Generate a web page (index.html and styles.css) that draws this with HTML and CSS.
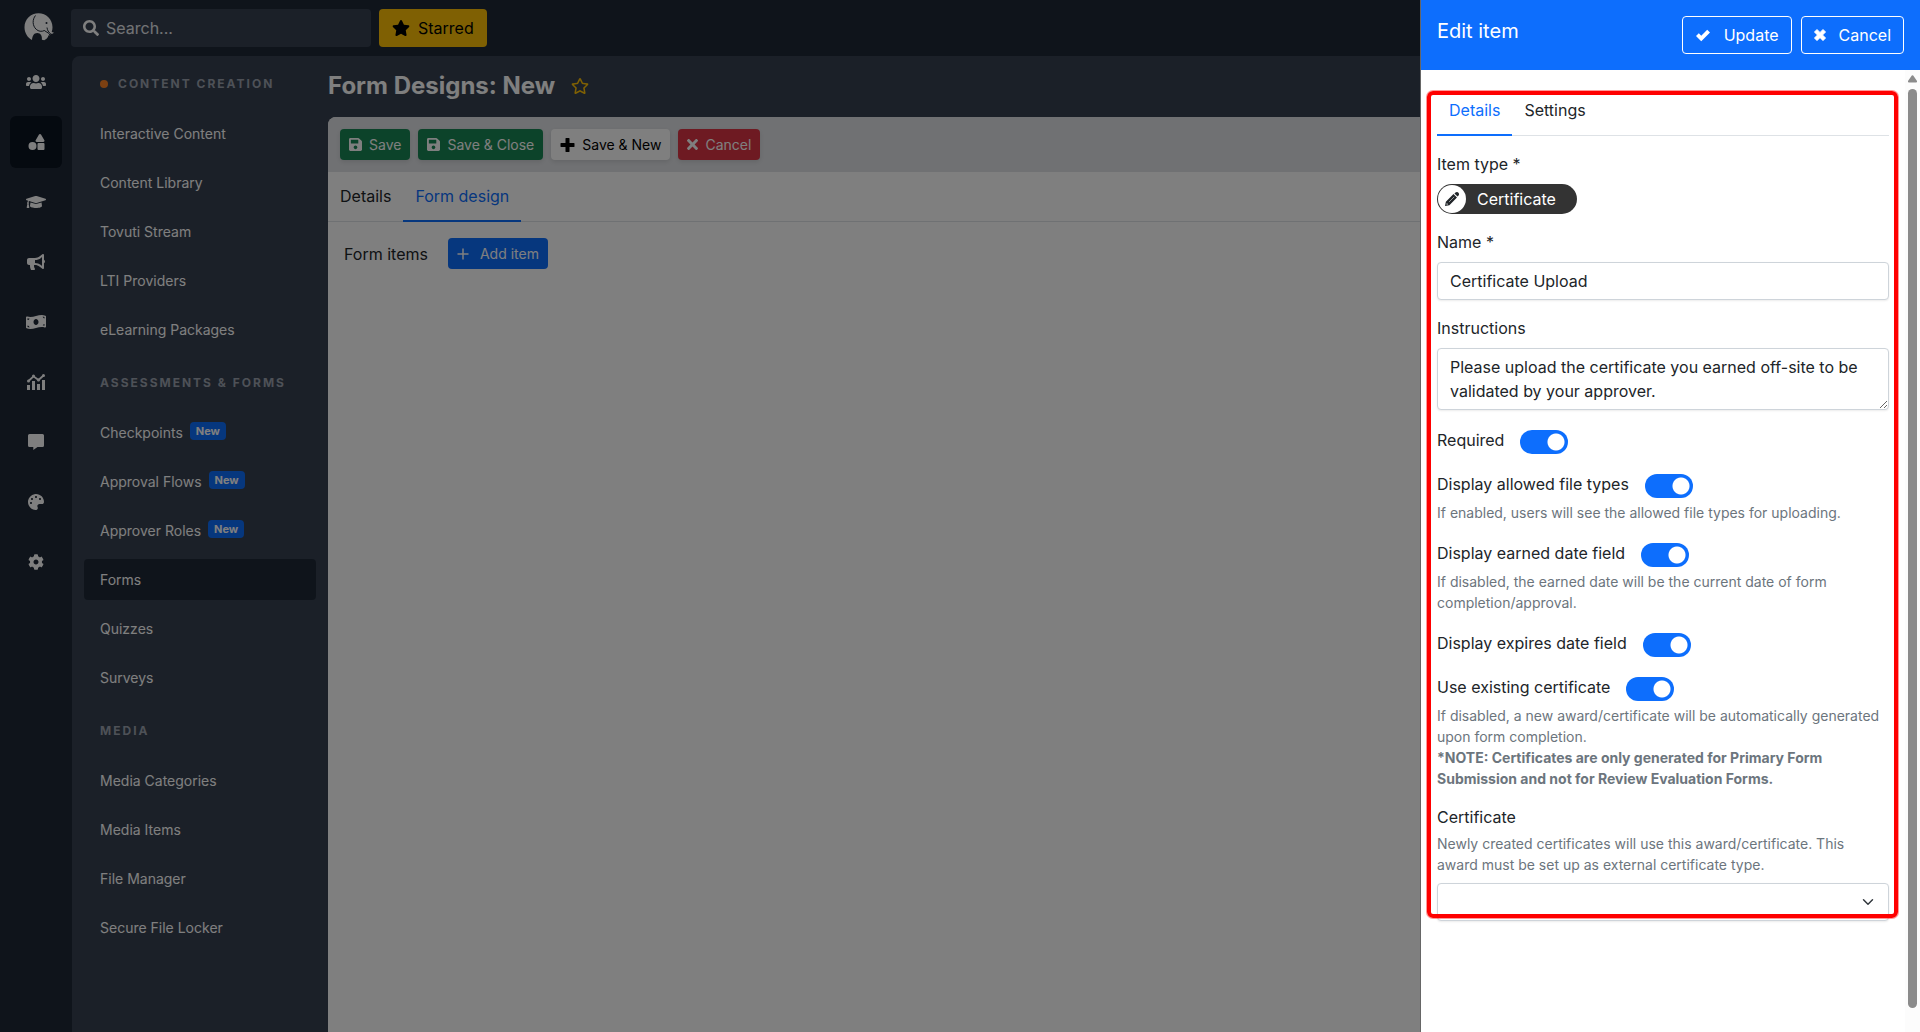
FILE: index.html
```html
<!DOCTYPE html>
<html lang="en">
<head>
    <meta charset="UTF-8">
    <meta name="viewport" content="width=device-width, initial-scale=1.0">
    <title>Form Designs: New</title>
    <link rel="stylesheet" href="styles.css">
</head>
<body>
    <svg class="sprite" aria-hidden="true">
        <symbol id="i-users" viewBox="0 0 640 512"><path d="M96 224c35.3 0 64-28.7 64-64s-28.7-64-64-64-64 28.7-64 64 28.7 64 64 64zm448 0c35.3 0 64-28.7 64-64s-28.7-64-64-64-64 28.7-64 64 28.7 64 64 64zm32 32h-64c-17.6 0-33.5 7.1-45.1 18.6 40.3 22.1 68.9 62 75.1 109.4h66c17.7 0 32-14.3 32-32v-32c0-35.3-28.7-64-64-64zm-256 0c61.9 0 112-50.1 112-112S381.9 32 320 32 208 82.1 208 144s50.1 112 112 112zm76.8 32h-8.3c-20.8 10-43.9 16-68.5 16s-47.6-6-68.5-16h-8.3C179.6 288 128 339.6 128 403.2V432c0 26.5 21.5 48 48 48h288c26.5 0 48-21.5 48-48v-28.8c0-63.6-51.6-115.2-115.2-115.2zm-223.7-13.4C161.5 263.1 145.6 256 128 256H64c-35.3 0-64 28.7-64 64v32c0 17.7 14.3 32 32 32h65.9c6.3-47.4 34.9-87.3 75.2-109.4z"/></symbol>
        <symbol id="i-shapes" viewBox="0 0 512 512"><path d="M128 256A128 128 0 1 0 256 384 128 128 0 0 0 128 256Zm379-54.86L400.07 18.29a37.26 37.26 0 0 0-64.14 0L229 201.14C214.76 225.52 232.58 256 261.09 256H474.91C503.42 256 521.24 225.52 507 201.14ZM480 288H320a32 32 0 0 0-32 32V480a32 32 0 0 0 32 32H480a32 32 0 0 0 32-32V320A32 32 0 0 0 480 288Z"/></symbol>
        <symbol id="i-cap" viewBox="0 0 640 512"><path d="M622.34 153.2L343.4 67.5c-15.2-4.67-31.6-4.67-46.79 0L17.66 153.2c-23.54 7.23-23.54 38.36 0 45.59l48.63 14.94c-10.67 13.19-17.23 29.28-17.88 46.9C38.78 266.15 32 276.11 32 288c0 10.78 5.68 19.85 13.86 25.65L20.33 428.53C18.11 438.52 25.71 448 35.94 448h56.11c10.24 0 17.84-9.48 15.62-19.47L82.14 313.65C90.32 307.85 96 298.78 96 288c0-11.57-6.47-21.25-15.66-26.87.76-15.02 8.44-28.3 20.69-36.72L296.6 284.5c9.06 2.78 26.44 6.25 46.79 0l278.95-85.7c23.55-7.24 23.55-38.36 0-45.6zM352.79 315.09c-28.53 8.76-52.84 3.92-65.59 0l-145.02-44.55L128 384c0 35.35 85.96 64 192 64s192-28.65 192-64l-14.18-113.47-145.03 44.56z"/></symbol>
        <symbol id="i-bullhorn" viewBox="0 0 576 512"><path d="M576 240c0-23.63-12.95-44.04-32-55.12V32.01C544 23.26 537.02 0 512 0c-7.12 0-14.19 2.38-19.98 7.02l-85.03 68.03C364.28 109.19 310.66 128 256 128H64c-35.35 0-64 28.65-64 64v96c0 35.35 28.65 64 64 64h33.7c-1.39 10.48-2.18 21.14-2.18 32 0 39.77 9.26 77.35 25.56 110.94 5.19 10.69 16.52 17.06 28.4 17.06h74.28c26.05 0 41.69-29.84 25.9-50.56-16.4-21.52-26.15-48.36-26.15-77.44 0-11.11 1.62-21.79 4.41-32H256c54.66 0 108.28 18.81 150.98 52.95l85.03 68.03a32.023 32.023 0 0 0 19.98 7.02c24.92 0 32-22.78 32-32V295.13C563.05 284.04 576 263.63 576 240zm-96 141.42l-33.05-26.44C392.95 311.78 325.12 288 256 288v-96c69.12 0 136.95-23.78 190.95-66.98L480 98.58v282.84z"/></symbol>
        <symbol id="i-money" viewBox="0 0 640 512"><path d="M621.16 54.46C582.37 38.19 543.55 32 504.75 32c-123.17-.01-246.33 62.34-369.5 62.34-30.89 0-61.76-3.92-92.65-13.72-3.47-1.1-6.95-1.62-10.35-1.62C15.04 79 0 92.32 0 110.81v317.26c0 12.63 7.23 24.6 18.84 29.46C57.63 473.81 96.45 480 135.25 480c123.17 0 246.34-62.35 369.51-62.35 30.89 0 61.76 3.92 92.65 13.72 3.47 1.1 6.95 1.62 10.35 1.62 17.21 0 32.25-13.32 32.25-31.81V83.93c-.01-12.64-7.24-24.6-18.85-29.47zM48 132.22c20.12 5.04 41.12 7.57 62.72 8.93C104.84 170.54 79 192.69 48 192.69v-60.47zm0 285v-47.78c34.37 0 62.18 27.27 63.71 61.4-22.53-1.81-43.59-6.31-63.71-13.62zM320 352c-44.19 0-80-42.99-80-96 0-53.02 35.82-96 80-96s80 42.98 80 96c0 53.03-35.83 96-80 96zm272 27.78c-17.52-4.39-35.71-6.85-54.32-8.44 5.87-26.08 27.5-45.88 54.32-49.28v57.72zm0-236.11c-30.89-3.91-54.86-29.7-55.81-61.55 19.54 2.17 38.09 6.23 55.81 12.66v48.89z"/></symbol>
        <symbol id="i-chart" viewBox="0 0 19 16"><path d="M0 11h3v5H0zM5 7h3v9H5zM10 10h3v6h-3zM15 6h3v10h-3z"/><path d="M1.500 7 6.500 2.300 11.500 6 16.500 1.500" fill="none" stroke="currentColor" stroke-width="1.800"/><circle cx="1.500" cy="7" r="1.500"/><circle cx="6.500" cy="2" r="1.500"/><circle cx="11.500" cy="6" r="1.500"/><circle cx="16.500" cy="1.500" r="1.500"/></symbol>
        <symbol id="i-comment" viewBox="0 0 16 16"><path d="M1.500 0h13A1.500 1.500 0 0 1 16 1.500v10a1.500 1.500 0 0 1-1.500 1.500H9.500L5.300 16v-3H1.500A1.500 1.500 0 0 1 0 11.500V1.500A1.500 1.500 0 0 1 1.500 0z"/></symbol>
        <symbol id="i-palette" viewBox="0 0 512 512"><path d="M204.3 5C104.9 24.4 24.8 104.3 5.2 203.4c-37 187 131.7 326.4 258.8 306.7 41.2-6.4 61.4-54.6 42.5-91.7-23.1-45.4 9.9-98.4 60.9-98.4h79.7c35.8 0 64.8-29.6 64.9-65.3C511.5 97.1 368.1-26.9 204.3 5zM96 320c-17.7 0-32-14.3-32-32s14.3-32 32-32 32 14.3 32 32-14.3 32-32 32zm32-128c-17.7 0-32-14.3-32-32s14.3-32 32-32 32 14.3 32 32-14.3 32-32 32zm128-64c-17.7 0-32-14.3-32-32s14.3-32 32-32 32 14.3 32 32-14.3 32-32 32zm128 64c-17.7 0-32-14.3-32-32s14.3-32 32-32 32 14.3 32 32-14.3 32-32 32z"/></symbol>
        <symbol id="i-cog" viewBox="0 0 512 512"><path d="M487.4 315.7l-42.6-24.6c4.3-23.2 4.3-47 0-70.2l42.6-24.6c4.9-2.8 7.1-8.6 5.5-14-11.1-35.6-30-67.8-54.7-94.6-3.8-4.1-10-5.1-14.8-2.3L380.8 110c-17.9-15.4-38.5-27.3-60.8-35.1V25.8c0-5.6-3.9-10.5-9.4-11.7-36.7-8.2-74.3-7.8-109.2 0-5.5 1.2-9.4 6.1-9.4 11.7V75c-22.2 7.9-42.8 19.8-60.8 35.1L88.7 85.5c-4.9-2.8-11-1.9-14.8 2.3-24.7 26.7-43.6 58.9-54.7 94.6-1.7 5.4.6 11.2 5.5 14L67.3 221c-4.3 23.2-4.3 47 0 70.2l-42.6 24.6c-4.9 2.8-7.1 8.6-5.5 14 11.1 35.6 30 67.8 54.7 94.6 3.8 4.1 10 5.1 14.8 2.3l42.6-24.6c17.9 15.4 38.5 27.3 60.8 35.1v49.2c0 5.6 3.9 10.5 9.4 11.7 36.7 8.2 74.3 7.8 109.2 0 5.5-1.2 9.4-6.1 9.4-11.7v-49.2c22.2-7.9 42.8-19.8 60.8-35.1l42.6 24.6c4.9 2.8 11 1.9 14.8-2.3 24.7-26.7 43.6-58.9 54.7-94.6 1.5-5.5-.7-11.3-5.6-14.1zM256 336c-44.1 0-80-35.9-80-80s35.9-80 80-80 80 35.9 80 80-35.9 80-80 80z"/></symbol>
        <symbol id="i-search" viewBox="0 0 512 512"><path d="M505 442.7L405.3 343c-4.5-4.5-10.6-7-17-7H372c27.6-35.3 44-79.7 44-128C416 93.1 322.9 0 208 0S0 93.1 0 208s93.1 208 208 208c48.3 0 92.7-16.4 128-44v16.3c0 6.4 2.5 12.5 7 17l99.7 99.7c9.4 9.4 24.6 9.4 33.9 0l28.3-28.3c9.4-9.4 9.4-24.6.1-34zM208 336c-70.7 0-128-57.2-128-128 0-70.7 57.2-128 128-128 70.7 0 128 57.2 128 128 0 70.7-57.2 128-128 128z"/></symbol>
        <symbol id="i-star" viewBox="0 0 576 512"><path d="M259.3 17.8L194 150.2 47.9 171.5c-26.2 3.8-36.7 36.1-17.7 54.6l105.7 103-25 145.5c-4.5 26.3 23.2 46 46.4 33.7L288 439.6l130.7 68.7c23.2 12.2 50.9-7.4 46.4-33.7l-25-145.5 105.7-103c19-18.5 8.5-50.8-17.7-54.6L382 150.2 316.7 17.8c-11.7-23.6-45.6-23.9-57.4 0z"/></symbol>
        <symbol id="i-star-o" viewBox="0 0 576 512"><path d="M528.1 171.5L382 150.2 316.7 17.8c-11.7-23.6-45.6-23.9-57.4 0L194 150.2 47.9 171.5c-26.2 3.8-36.7 36.1-17.7 54.6l105.7 103-25 145.5c-4.5 26.3 23.2 46 46.4 33.7L288 439.6l130.7 68.7c23.2 12.2 50.9-7.4 46.4-33.7l-25-145.5 105.7-103c19-18.5 8.5-50.8-17.7-54.6zM388.6 312.3l23.7 138.4L288 385.4l-124.3 65.3 23.7-138.4-100.6-98 139-20.2 62.2-126 62.2 126 139 20.2-100.6 98z"/></symbol>
        <symbol id="i-save" viewBox="0 0 448 448"><path transform="translate(0 -32)" d="M433.941 129.941l-83.882-83.882A48 48 0 0 0 316.118 32H48C21.49 32 0 53.49 0 80v352c0 26.51 21.49 48 48 48h352c26.51 0 48-21.49 48-48V163.882a48 48 0 0 0-14.059-33.941zM224 416c-35.346 0-64-28.654-64-64 0-35.346 28.654-64 64-64s64 28.654 64 64c0 35.346-28.654 64-64 64zm96-304.52V212c0 6.627-5.373 12-12 12H76c-6.627 0-12-5.373-12-12V108c0-6.627 5.373-12 12-12h228.52c3.183 0 6.235 1.264 8.485 3.515l3.48 3.48A11.996 11.996 0 0 1 320 111.48z"/></symbol>
        <symbol id="i-times" viewBox="0 80 352 352"><path d="M242.72 256l100.07-100.07c12.28-12.28 12.28-32.19 0-44.48l-22.24-22.24c-12.28-12.28-32.19-12.28-44.48 0L176 189.28 75.93 89.21c-12.28-12.28-32.19-12.28-44.48 0L9.21 111.45c-12.28 12.28-12.28 32.19 0 44.48L109.28 256 9.21 356.07c-12.28 12.28-12.28 32.19 0 44.48l22.24 22.24c12.28 12.28 32.2 12.28 44.48 0L176 322.72l100.07 100.07c12.28 12.28 32.2 12.28 44.48 0l22.24-22.24c12.28-12.28 12.28-32.19 0-44.48L242.72 256z"/></symbol>
        <symbol id="i-plus-bold" viewBox="0 0 16 16"><path d="M15.500 5.700H10.300V.500A.500.500 0 0 0 9.800 0H6.200a.500.500 0 0 0-.500.500v5.200H.500a.500.500 0 0 0-.500.500v3.600a.500.500 0 0 0 .500.500h5.200v5.200a.500.500 0 0 0 .500.500h3.600a.500.500 0 0 0 .500-.500v-5.200h5.200a.500.500 0 0 0 .500-.500V6.200a.500.500 0 0 0-.500-.500z"/></symbol>
        <symbol id="i-plus" viewBox="0 0 12 12"><path d="M6 .500v11M.500 6h11" fill="none" stroke="currentColor" stroke-width="1.500"/></symbol>
        <symbol id="i-check" viewBox="0 0 16 16"><path d="M12.800 2 6 8.800 3.200 6 0 9.200l6 6L16 5.200z"/></symbol>
        <symbol id="i-cross" viewBox="0 0 16 16"><path d="M4 .500 8 4.500l4-4L15.500 4l-4 4 4 4-3.500 3.500-4-4-4 4L.500 12l4-4-4-4z" stroke="currentColor" stroke-linejoin="round"/></symbol>
        <symbol id="i-pencil" viewBox="0 0 16 16"><path d="M13.500 0a2.500 2.500 0 0 1 2 4l-1.200 1.200-3.500-3.500L12 .500a2.500 2.500 0 0 1 1.500-.500zM1 11 0 16l5-1 8.700-8.700-4-4L1 11zM2 12.500 3.500 14l-1.700.500z" fill-rule="evenodd"/><path d="M4.500 11.500l6-6" fill="none" stroke="#fff" stroke-width=".600"/></symbol>
    </svg>

    <div class="app">
        <nav class="rail" aria-label="Main">
            <a href="#" class="logo" aria-label="Home">
                <svg viewBox="0 0 30 28" width="30" height="28">
                    <path fill="#fff" d="M8 27C3.500 24.500.500 19.800.500 14.200.500 6.500 6.800.300 14.500.300S28.500 6.500 28.500 14.200c0 1.700-.300 3.200-.800 4.600.600.700 1.300.900 2.300.700-.900 1.300-2 1.600-3.300 1.200-1.500 2.900-3.700 5.100-6.500 6.500l-2.300-.500c.300-3.800-1-6.500-4.600-6.700-3.300-.100-5 2.700-5.300 7z"/>
                    <path fill="none" stroke="#1f2937" stroke-width="1" d="M11.500 2.500c-3.200 4-3.300 10 .700 13.800 2.300 2.200 5.500 2.600 8.300 1.200M20.300 17.500l4.700 3M23 14.500c.300 2.600 1.400 4.700 3.600 6.100M23 27l3-6.500"/>
                    <circle cx="22.500" cy="10" r="1" fill="#1f2937"/>
                </svg>
            </a>
            <a href="#" class="rail-link" aria-label="Users"><svg width="20" height="16"><use href="#i-users"/></svg></a>
            <a href="#" class="rail-link active" aria-label="Content"><svg width="17" height="16"><use href="#i-shapes"/></svg></a>
            <a href="#" class="rail-link" aria-label="Learning"><svg width="20" height="16"><use href="#i-cap"/></svg></a>
            <a href="#" class="rail-link" aria-label="Marketing"><svg width="18" height="16"><use href="#i-bullhorn"/></svg></a>
            <a href="#" class="rail-link" aria-label="Commerce"><svg width="20" height="16"><use href="#i-money"/></svg></a>
            <a href="#" class="rail-link" aria-label="Reports"><svg width="19" height="16"><use href="#i-chart"/></svg></a>
            <a href="#" class="rail-link" aria-label="Messages"><svg width="16" height="16"><use href="#i-comment"/></svg></a>
            <a href="#" class="rail-link" aria-label="Design"><svg width="16" height="16"><use href="#i-palette"/></svg></a>
            <a href="#" class="rail-link" aria-label="Settings"><svg width="16" height="16"><use href="#i-cog"/></svg></a>
        </nav>

        <div class="main">
            <header class="topbar">
                <label class="search">
                    <svg width="16" height="16"><use href="#i-search"/></svg>
                    <input type="search" placeholder="Search..." aria-label="Search">
                </label>
                <button type="button" class="starred"><svg width="18" height="16"><use href="#i-star"/></svg>Starred</button>
            </header>

            <div class="panel">
                <nav class="menu" aria-label="Content">
                    <h2><span class="dot"></span>Content Creation</h2>
                    <a href="#">Interactive Content</a>
                    <a href="#">Content Library</a>
                    <a href="#">Tovuti Stream</a>
                    <a href="#">LTI Providers</a>
                    <a href="#">eLearning Packages</a>
                    <h2>Assessments &amp; Forms</h2>
                    <a href="#">Checkpoints <span class="badge">New</span></a>
                    <a href="#">Approval Flows <span class="badge">New</span></a>
                    <a href="#">Approver Roles <span class="badge">New</span></a>
                    <a href="#" class="active">Forms</a>
                    <a href="#">Quizzes</a>
                    <a href="#">Surveys</a>
                    <h2>Media</h2>
                    <a href="#">Media Categories</a>
                    <a href="#">Media Items</a>
                    <a href="#">File Manager</a>
                    <a href="#">Secure File Locker</a>
                </nav>

                <main class="content">
                    <div class="page-title">
                        <h1>Form Designs: New</h1>
                        <button type="button" class="star-button" aria-label="Star this page"><svg width="18" height="16"><use href="#i-star-o"/></svg></button>
                    </div>
                    <div class="card">
                        <div class="toolbar">
                            <button type="button" class="btn btn-success"><svg width="13" height="13"><use href="#i-save"/></svg>Save</button>
                            <button type="button" class="btn btn-success"><svg width="13" height="13"><use href="#i-save"/></svg>Save &amp; Close</button>
                            <button type="button" class="btn btn-light"><svg width="15" height="14"><use href="#i-plus-bold"/></svg>Save &amp; New</button>
                            <button type="button" class="btn btn-danger"><svg width="11" height="11"><use href="#i-times"/></svg>Cancel</button>
                        </div>
                        <div class="tabs">
                            <a href="#">Details</a>
                            <a href="#" class="active">Form design</a>
                        </div>
                        <div class="form-items">
                            <span>Form items</span>
                            <button type="button" class="btn btn-primary"><svg width="12" height="12"><use href="#i-plus"/></svg>Add item</button>
                        </div>
                    </div>
                </main>
            </div>
        </div>
    </div>

    <div class="backdrop"></div>

    <aside class="drawer">
        <header class="drawer-header">
            <h2>Edit item</h2>
            <div class="drawer-actions">
                <button type="button"><svg width="16" height="14"><use href="#i-check"/></svg>Update</button>
                <button type="button"><svg width="12" height="12"><use href="#i-cross"/></svg>Cancel</button>
            </div>
        </header>
        <div class="drawer-body">
            <form class="item-form">
                <div class="tabs">
                    <a href="#" class="active">Details</a>
                    <a href="#">Settings</a>
                </div>

                <div class="field">
                    <label for="item-type">Item type *</label>
                    <button type="button" id="item-type" class="type-pill"><span class="type-icon"><svg width="14" height="14"><use href="#i-pencil"/></svg></span>Certificate</button>
                </div>
                <div class="field">
                    <label for="name">Name *</label>
                    <input type="text" id="name" class="control" value="Certificate Upload">
                </div>
                <div class="field">
                    <label for="instructions">Instructions</label>
                    <textarea id="instructions" class="control" rows="2">Please upload the certificate you earned off-site to be validated by your approver.</textarea>
                </div>

                <div class="field">
                    <div class="switch-row">
                        <label for="required">Required</label>
                        <input type="checkbox" id="required" class="switch" checked>
                    </div>
                </div>
                <div class="field">
                    <div class="switch-row">
                        <label for="file-types">Display allowed file types</label>
                        <input type="checkbox" id="file-types" class="switch" checked>
                    </div>
                    <p class="help">If enabled, users will see the allowed file types for uploading.</p>
                </div>
                <div class="field">
                    <div class="switch-row">
                        <label for="earned">Display earned date field</label>
                        <input type="checkbox" id="earned" class="switch" checked>
                    </div>
                    <p class="help">If disabled, the earned date will be the current date of form completion/approval.</p>
                </div>
                <div class="field">
                    <div class="switch-row">
                        <label for="expires">Display expires date field</label>
                        <input type="checkbox" id="expires" class="switch" checked>
                    </div>
                </div>
                <div class="field">
                    <div class="switch-row">
                        <label for="existing">Use existing certificate</label>
                        <input type="checkbox" id="existing" class="switch" checked>
                    </div>
                    <p class="help">If disabled, a new award/certificate will be automatically generated upon form completion.<br>
                    <strong>*NOTE: Certificates are only generated for Primary Form Submission and not for Review Evaluation Forms.</strong></p>
                </div>
                <div class="field">
                    <label for="certificate" class="tight">Certificate</label>
                    <p class="help help-above">Newly created certificates will use this award/certificate. This award must be set up as external certificate type.</p>
                    <select id="certificate" class="control">
                        <option></option>
                    </select>
                </div>
                <div class="highlight"></div>
            </form>
            <div class="scrollbar">
                <svg width="9" height="8" viewBox="0 0 9 8"><path fill="#8b8b8b" d="M3.800.600a1 1 0 0 1 1.400 0L9 6c.300.800 0 1.500-.800 1.500H.800C0 7.500-.300 6.800 0 6z"/></svg>
                <div class="thumb"></div>
            </div>
        </div>
    </aside>
</body>
</html>
```
FILE: styles.css
```css
* {
    box-sizing: border-box;
}
body {
    margin: 0;
    background-color: #1f2937;
    color: #212529;
    font-family: Inter, sans-serif;
    font-size: 16px;
    line-height: 24px;
}
h1, h2, p {
    margin: 0;
}
a {
    color: inherit;
    text-decoration: none;
}
button, input, textarea, select {
    font: inherit;
}
button {
    cursor: pointer;
}
svg {
    fill: currentColor;
    flex: none;
}
.sprite {
    display: none;
}

.app {
    display: flex;
    min-height: 100vh;
}

/* icon rail */
.rail {
    display: flex;
    flex-direction: column;
    width: 72px;
    padding: 0 10px;
    gap: 8px;
    color: #fff;
}
.logo {
    display: flex;
    justify-content: flex-end;
    height: 48px;
    padding: 13px 8px 0 0;
}
.rail-link {
    display: flex;
    align-items: center;
    justify-content: center;
    height: 52px;
    border-radius: 6px;
}
.rail-link.active {
    background-color: #0b1420;
}

.main {
    flex: 1;
    display: flex;
    flex-direction: column;
}
.topbar {
    display: flex;
    align-items: center;
    gap: 8px;
    height: 56px;
    margin-left: -1px;
}
.search {
    display: flex;
    align-items: center;
    gap: 7px;
    width: 300px;
    height: 38px;
    padding: 0 12px;
    background-color: #374151;
    border-radius: 4px;
    color: #fff;
}
.search input {
    flex: 1;
    min-width: 0;
    padding: 0;
    background: none;
    border: none;
    outline: none;
    color: #fff;
}
.search input::placeholder {
    color: #e5e7eb;
}
.starred {
    display: flex;
    align-items: center;
    gap: 8px;
    height: 38px;
    padding: 0 13px;
    background-color: #ffc107;
    border: none;
    border-radius: 4px;
    color: #000;
}

.panel {
    flex: 1;
    display: flex;
    background-color: #374151;
    border-top-left-radius: 8px;
}

/* section menu */
.menu {
    display: flex;
    flex-direction: column;
    width: 256px;
    padding: 3px 12px 0;
    color: #fff;
    font-size: 14px;
    line-height: 21px;
}
.menu h2 {
    display: flex;
    align-items: center;
    padding: 15px 16px 19px;
    color: #9ca3af;
    font-size: 12px;
    line-height: 20px;
    letter-spacing: 2px;
    text-transform: uppercase;
}
.menu a {
    padding: 10px 16px;
    margin-bottom: 8px;
    border-radius: 4px;
}
.menu a.active {
    background-color: #1f2937;
}
.dot {
    width: 8px;
    height: 8px;
    margin-right: 10px;
    background-color: #f98125;
    border-radius: 50%;
}
.badge {
    display: inline-block;
    margin-left: 3px;
    padding: 0 6px;
    background-color: #0d6efd;
    border-radius: 4px;
    font-size: 11px;
    font-weight: 700;
    line-height: 18px;
    vertical-align: top;
}

.content {
    flex: 1;
    display: flex;
    flex-direction: column;
}
.page-title {
    display: flex;
    align-items: center;
    gap: 16px;
    height: 61px;
    padding-bottom: 2px;
    color: #fff;
}
.page-title h1 {
    font-size: 24px;
    font-weight: 700;
}
.star-button {
    display: flex;
    padding: 0;
    background: none;
    border: none;
    color: #ffc107;
}
.card {
    flex: 1;
    background-color: #fff;
    border-top-left-radius: 8px;
    overflow: hidden;
}
.toolbar {
    display: flex;
    gap: 8px;
    padding: 12px;
    background-color: #e0e2e6;
}
.btn {
    display: flex;
    align-items: center;
    gap: 7px;
    height: 31px;
    padding: 0 9px;
    border: none;
    border-radius: 4px;
    color: #fff;
    font-size: 14px;
    box-shadow: 0 2px 4px rgba(0, 0, 0, 0.1);
}
.btn-success {
    background-color: #198754;
}
.btn-light {
    background-color: #fff;
    color: #000;
}
.btn-danger {
    background-color: #dc3545;
}
.btn-primary {
    gap: 11px;
    background-color: #0d6efd;
    box-shadow: none;
}

.tabs {
    display: flex;
    border-bottom: 1px solid #dee2e6;
}
.tabs a {
    padding: 12px;
    margin-bottom: -1px;
    border-bottom: 2px solid transparent;
}
.tabs a.active {
    border-color: #0d6efd;
    color: #0d6efd;
}
.form-items {
    display: flex;
    align-items: center;
    gap: 20px;
    padding: 16px;
}

/* edit drawer */
.backdrop {
    position: fixed;
    inset: 0;
    background-color: rgba(0, 0, 0, 0.5);
}
.drawer {
    position: fixed;
    top: 0;
    right: 0;
    bottom: 0;
    display: flex;
    flex-direction: column;
    width: 500px;
    background-color: #fff;
    border-left: 1px solid #666;
}
.drawer-header {
    display: flex;
    justify-content: space-between;
    padding: 16px;
    background-color: #0d6efd;
    color: #fff;
}
.drawer-header h2 {
    font-size: 20px;
    font-weight: 400;
    line-height: 30px;
}
.drawer-actions {
    display: flex;
    gap: 9px;
}
.drawer-actions button {
    display: flex;
    align-items: center;
    gap: 13px;
    height: 38px;
    padding: 0 12px;
    background: none;
    border: 1px solid #fff;
    border-radius: 4px;
    color: #fff;
}
.drawer-body {
    flex: 1;
    display: flex;
    align-items: flex-start;
    gap: 16px;
    padding-left: 16px;
}
.item-form {
    position: relative;
    flex: 1;
    margin-top: 16px;
}
.field {
    margin-top: 16px;
}
.field label {
    display: block;
    margin-bottom: 8px;
}
.field label.tight {
    margin-bottom: 4px;
}
.type-pill {
    display: flex;
    align-items: center;
    gap: 11px;
    height: 30px;
    padding: 0 21px 0 1px;
    background-color: #333;
    border: none;
    border-radius: 15px;
    color: #fff;
}
.type-icon {
    display: flex;
    align-items: center;
    justify-content: center;
    width: 28px;
    height: 28px;
    background-color: #fff;
    border-radius: 50%;
    color: #212529;
}
.control {
    display: block;
    width: 100%;
    padding: 6px 12px;
    background-color: #fff;
    border: 1px solid #ced4da;
    border-radius: 4px;
    color: #212529;
    outline: none;
    box-shadow: 0 1px 2px rgba(0, 0, 0, 0.08);
}
input.control, select.control {
    height: 38px;
}
textarea.control {
    height: 62px;
    overflow: hidden;
    resize: vertical;
}
select.control {
    appearance: none;
    background-image: url("data:image/svg+xml,%3Csvg xmlns='http://www.w3.org/2000/svg' viewBox='0 0 16 16'%3E%3Cpath fill='none' stroke='%23343a40' stroke-linecap='round' stroke-linejoin='round' stroke-width='2' d='m2 5 6 6 6-6'/%3E%3C/svg%3E");
    background-repeat: no-repeat;
    background-position: right 14px center;
    background-size: 12px 12px;
}
.switch-row {
    display: flex;
    align-items: flex-start;
    gap: 16px;
}
.switch-row label {
    margin: 2px 0 0;
}
.switch {
    appearance: none;
    width: 48px;
    height: 24px;
    margin: 4px 0 0;
    background: radial-gradient(circle at 36px 12px, #fff 8px, #0d6efd 9px);
    border-radius: 12px;
}
.help {
    margin-top: 4px;
    padding-right: 4px;
    color: #6c757d;
    font-size: 14px;
    line-height: 21px;
}
.help-above {
    margin-bottom: 8px;
}
/* frame drawn over the form */
.highlight {
    position: absolute;
    top: 5px;
    right: -9px;
    bottom: 3px;
    left: -10px;
    border: 4px solid #f00;
    border-radius: 6px;
    box-shadow: 0 0 0 1px rgba(255, 0, 0, 0.4);
    pointer-events: none;
}
.scrollbar {
    align-self: stretch;
    display: flex;
    flex-direction: column;
    align-items: center;
    gap: 6px;
    width: 15px;
    padding: 5px 0 24px;
    background-color: #fcfcfc;
}
.thumb {
    flex: 1;
    width: 9px;
    background-color: #8b8b8b;
    border-radius: 5px;
}
```
